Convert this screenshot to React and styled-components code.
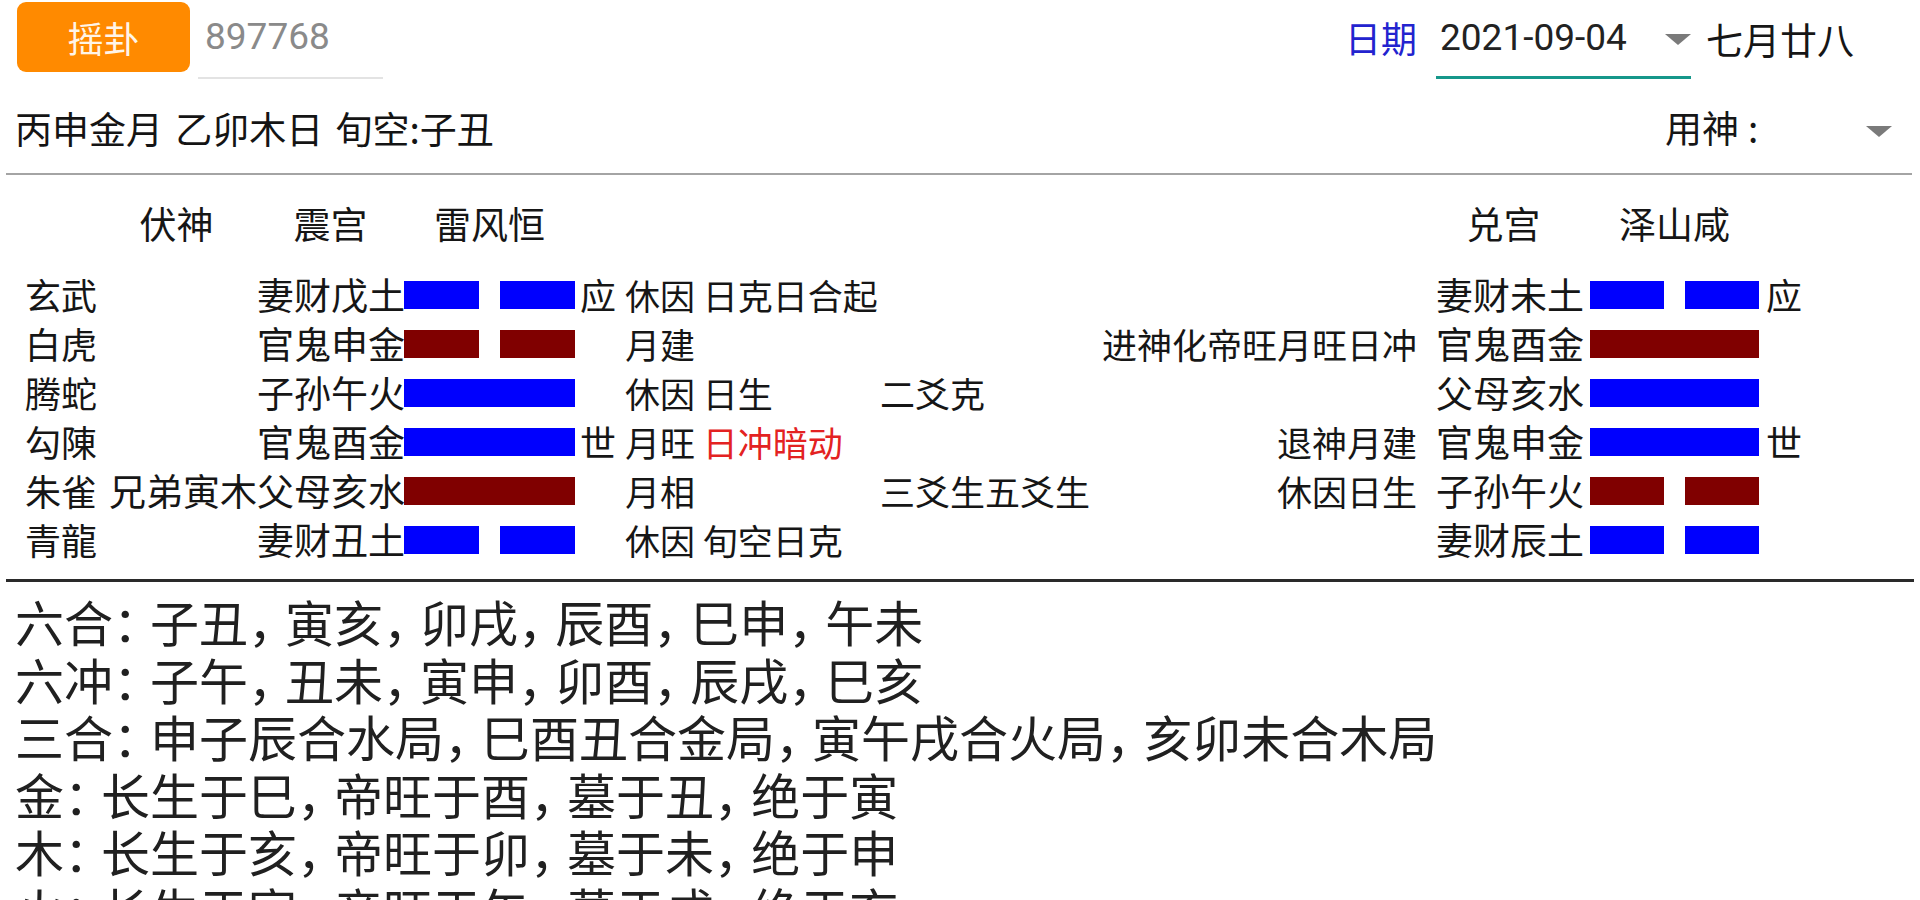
import React from 'react';
import styled, { createGlobalStyle } from 'styled-components';

const CJK = '"Noto Sans CJK SC", "Noto Sans", sans-serif';

const Global = createGlobalStyle`
  html, body { margin: 0; padding: 0; background: #ffffff; }
  body {
    font-family: ${CJK};
    color: #161616;
    width: 1920px;
    height: 900px;
    overflow: hidden;
  }
  * { box-sizing: border-box; }
`;

const Page = styled.div`
  width: 1920px;
  height: 900px;
  overflow: hidden;
  background: #fff;
`;

/* ---------- top bar ---------- */
const TopBar = styled.div`
  display: flex;
  align-items: flex-start;
  height: 80px;
`;

const ShakeButton = styled.button`
  margin: 2px 0 0 17px;
  width: 173px;
  height: 70px;
  border: none;
  border-radius: 9px;
  background: #ff8a00;
  color: #fff5e8;
  font-family: ${CJK};
  font-size: 36px;
  line-height: 68px;
  padding: 0;
  cursor: pointer;
`;

const NumberField = styled.div`
  margin-left: 8px;
  width: 185px;
  height: 79px;
  border-bottom: 2px solid #e3e3e3;
  padding-left: 7px;
  font-family: Roboto, "Liberation Sans", sans-serif;
  font-size: 37px;
  line-height: 74px;
  color: #8a8a8a;
`;

const DateGroup = styled.div`
  margin-left: auto;
  padding-right: 66px;
  display: flex;
  align-items: flex-start;
`;

const DateLabel = styled.span`
  font-size: 36px;
  line-height: 74px;
  color: #2323cf;
`;

const DatePicker = styled.div`
  margin-left: 19px;
  width: 255px;
  height: 79px;
  border-bottom: 3px solid #16978a;
  display: flex;
  align-items: center;
  padding-left: 4px;
`;

const DateValue = styled.span`
  font-family: Roboto, "Liberation Sans", sans-serif;
  font-size: 37px;
  line-height: 78px;
  color: #222;
  margin-top: -1px;
`;

const Caret = styled.span`
  margin-left: auto;
  margin-top: ${p => p.$top || 0}px;
  width: 0;
  height: 0;
  border-left: 13px solid transparent;
  border-right: 13px solid transparent;
  border-top: 11px solid #7a7a7a;
`;

const Lunar = styled.span`
  margin-left: 15px;
  font-size: 37px;
  line-height: 78px;
  color: #161616;
`;

/* ---------- info row ---------- */
const InfoRow = styled.div`
  display: flex;
  align-items: center;
  height: 93px;
  padding: 0 28px 0 15px;
  font-size: 37px;
`;

const GanZhi = styled.span`
  color: #141414;
  margin-top: 2px;
  word-spacing: 4px;
`;

const YongShen = styled.div`
  margin-left: auto;
  width: 227px;
  display: flex;
  align-items: center;
`;

const ColonMark = styled.span`
  padding-left: 9px;
`;

const Divider = styled.div`
  margin: 0 8px 0 6px;
  height: 2px;
  background: #a4a4a4;
`;

/* ---------- hexagram table ---------- */
const COLS = '83px 149px 147px 171px 50px 255px minmax(0, 1fr) 173px 169px 155px';

const Table = styled.section`
  margin: 0 6px;
  padding: 24px 0 15px 19px;
  border-bottom: 3px solid #2a2a2a;
  font-size: 36px;
  white-space: nowrap;
`;

const HeaderRow = styled.div`
  display: grid;
  grid-template-columns: ${COLS};
  height: 49px;
  line-height: 49px;
  margin-bottom: 22px;
  font-size: 37px;
`;

const LineRow = styled.div`
  display: grid;
  grid-template-columns: ${COLS};
  height: 49px;
  line-height: 49px;
  align-items: center;
`;

const Cell = styled.div`
  text-align: ${p => p.$align || 'left'};
  padding-right: ${p => p.$pr || 0}px;
  padding-left: ${p => p.$pl || 0}px;
  grid-column: ${p => p.$col || 'auto'};
  font-size: ${p => p.$size || 36}px;
`;

const Split = styled.div`
  display: flex;
  justify-content: space-between;
  font-size: 35px;
`;

const Hot = styled.span`
  color: #e32222;
`;

const Bar = styled.div`
  display: flex;
  justify-content: space-between;
  height: 28px;
  width: ${p => p.$w}px;
`;

const Segment = styled.div`
  height: 28px;
  width: ${p => (p.$full ? '100%' : `${p.$half}px`)};
  background: ${p => (p.$red ? '#800000' : '#0000fe')};
`;

function Yao({ yin, red, w }) {
  const half = Math.round((w - 21) / 2);
  return (
    <Bar $w={w}>
      {yin ? (
        <>
          <Segment $half={half} $red={red} />
          <Segment $half={half} $red={red} />
        </>
      ) : (
        <Segment $full $red={red} />
      )}
    </Bar>
  );
}

const rows = [
  {
    god: '玄武', fu: '', label: '妻财戊土', yin: true, red: false, mark: '应',
    status: '休因 日克日合起', rel: '', note: '',
    rLabel: '妻财未土', rYin: true, rRed: false, rMark: '应',
  },
  {
    god: '白虎', fu: '', label: '官鬼申金', yin: true, red: true, mark: '',
    status: '月建', rel: '', note: '进神化帝旺月旺日冲',
    rLabel: '官鬼酉金', rYin: false, rRed: true, rMark: '',
  },
  {
    god: '腾蛇', fu: '', label: '子孙午火', yin: false, red: false, mark: '',
    status: '休因 日生', rel: '二爻克', note: '',
    rLabel: '父母亥水', rYin: false, rRed: false, rMark: '',
  },
  {
    god: '勾陳', fu: '', label: '官鬼酉金', yin: false, red: false, mark: '世',
    status: (<>月旺 <Hot>日冲暗动</Hot></>), rel: '', note: '退神月建',
    rLabel: '官鬼申金', rYin: false, rRed: false, rMark: '世',
  },
  {
    god: '朱雀', fu: '兄弟寅木', label: '父母亥水', yin: false, red: true, mark: '',
    status: '月相', rel: '三爻生五爻生', note: '休因日生',
    rLabel: '子孙午火', rYin: true, rRed: true, rMark: '',
  },
  {
    god: '青龍', fu: '', label: '妻财丑土', yin: true, red: false, mark: '',
    status: '休因 旬空日克', rel: '', note: '',
    rLabel: '妻财辰土', rYin: true, rRed: false, rMark: '',
  },
];

/* ---------- rules text ---------- */
const Rules = styled.div`
  padding: 10px 0 0 15px;
  font-size: 49px;
  line-height: 57.5px;
  color: #202020;
  white-space: nowrap;
`;

const RuleLine = styled.div``;

const Punct = styled.span`
  letter-spacing: -12px;
`;

const ruleLines = [
  '六合：子丑，寅亥，卯戌，辰酉，巳申，午未',
  '六冲：子午，丑未，寅申，卯酉，辰戌，巳亥',
  '三合：申子辰合水局，巳酉丑合金局，寅午戌合火局，亥卯未合木局',
  '金：长生于巳，帝旺于酉，墓于丑，绝于寅',
  '木：长生于亥，帝旺于卯，墓于未，绝于申',
  '火：长生于寅，帝旺于午，墓于戌，绝于亥',
];

function RuleText({ text }) {
  const parts = text.split(/([，：])/);
  return (
    <RuleLine>
      {parts.map((p, i) =>
        p === '，' || p === '：' ? <Punct key={i}>{p}</Punct> : <React.Fragment key={i}>{p}</React.Fragment>
      )}
    </RuleLine>
  );
}

export default function App() {
  return (
    <Page>
      <Global />
      <TopBar>
        <ShakeButton>摇卦</ShakeButton>
        <NumberField>897768</NumberField>
        <DateGroup>
          <DateLabel>日期</DateLabel>
          <DatePicker>
            <DateValue>2021-09-04</DateValue>
            <Caret $top={2} />
          </DatePicker>
          <Lunar>七月廿八</Lunar>
        </DateGroup>
      </TopBar>

      <InfoRow>
        <GanZhi>丙申金月 乙卯木日 旬空:子丑</GanZhi>
        <YongShen>
          <span>用神<ColonMark>:</ColonMark></span>
          <Caret $top={10} />
        </YongShen>
      </InfoRow>
      <Divider />

      <Table>
        <HeaderRow>
          <Cell $col="2" $align="center" $pr={12} $size={37}>伏神</Cell>
          <Cell $col="3" $align="center" $size={37}>震宫</Cell>
          <Cell $col="4" $align="center" $size={37}>雷风恒</Cell>
          <Cell $col="8" $align="center" $size={37}>兑宫</Cell>
          <Cell $col="9" $align="center" $size={37}>泽山咸</Cell>
        </HeaderRow>
        {rows.map((r, i) => (
          <LineRow key={i}>
            <Cell>{r.god}</Cell>
            <Cell $align="right" $size={37}>{r.fu}</Cell>
            <Cell $align="right" $pr={3} $size={37}>{r.label}</Cell>
            <Yao yin={r.yin} red={r.red} w={171} />
            <Cell $pl={5}>{r.mark}</Cell>
            <Cell $size={35}>{r.status}</Cell>
            <Split>
              <span>{r.rel}</span>
              <span>{r.note}</span>
            </Split>
            <Cell $align="right" $pr={6} $size={37}>{r.rLabel}</Cell>
            <Yao yin={r.rYin} red={r.rRed} w={169} />
            <Cell $pl={7}>{r.rMark}</Cell>
          </LineRow>
        ))}
      </Table>

      <Rules>
        {ruleLines.map((t, i) => (
          <RuleText key={i} text={t} />
        ))}
      </Rules>
    </Page>
  );
}
